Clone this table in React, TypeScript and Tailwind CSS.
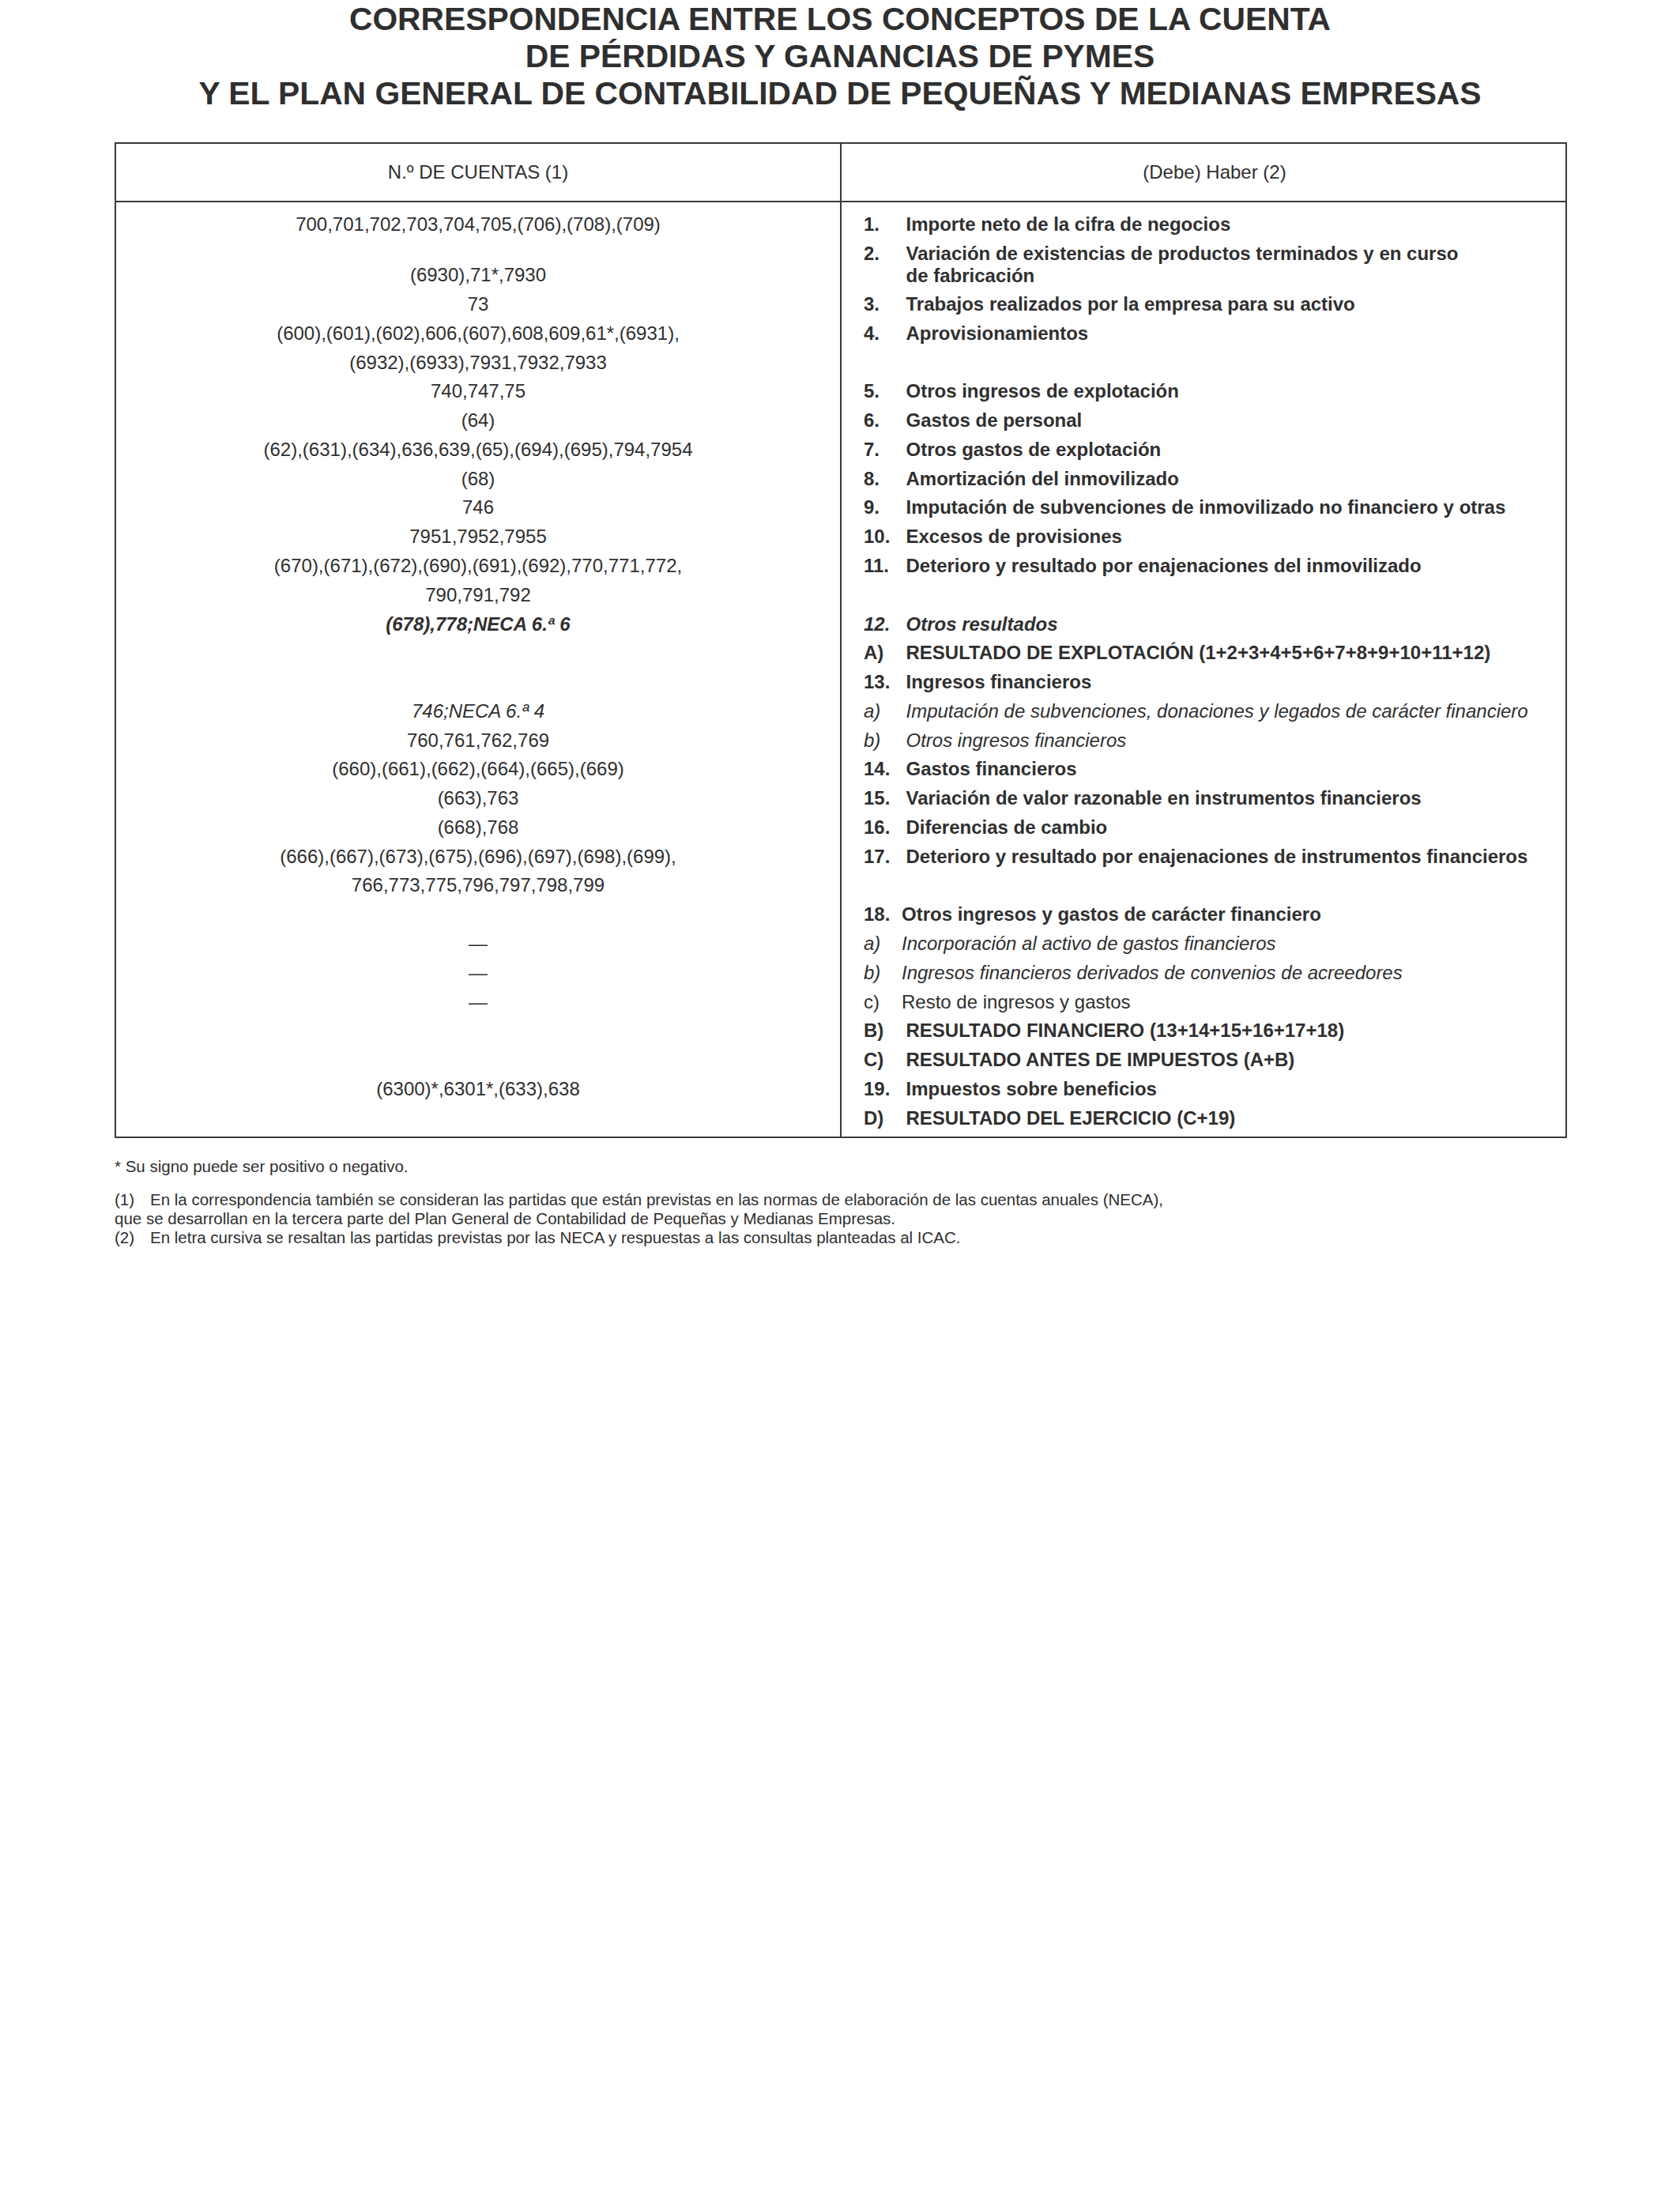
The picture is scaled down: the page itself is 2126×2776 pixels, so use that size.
type Row = {
  l?: string;
  ls?: "i" | "bi";
  n?: string;
  t?: string;
  t2?: string;
  r?: "b" | "i" | "bi" | "r";
  narrow?: boolean;
};

const rows: Row[] = [
  { l: "700,701,702,703,704,705,(706),(708),(709)", n: "1.", t: "Importe neto de la cifra de negocios" },
  {
    l: "(6930),71*,7930",
    n: "2.",
    t: "Variación de existencias de productos terminados y en curso",
    t2: "de fabricación"
  },
  { l: "73", n: "3.", t: "Trabajos realizados por la empresa para su activo" },
  { l: "(600),(601),(602),606,(607),608,609,61*,(6931),", n: "4.", t: "Aprovisionamientos" },
  { l: "(6932),(6933),7931,7932,7933" },
  { l: "740,747,75", n: "5.", t: "Otros ingresos de explotación" },
  { l: "(64)", n: "6.", t: "Gastos de personal" },
  { l: "(62),(631),(634),636,639,(65),(694),(695),794,7954", n: "7.", t: "Otros gastos de explotación" },
  { l: "(68)", n: "8.", t: "Amortización del inmovilizado" },
  { l: "746", n: "9.", t: "Imputación de subvenciones de inmovilizado no financiero y otras" },
  { l: "7951,7952,7955", n: "10.", t: "Excesos de provisiones" },
  {
    l: "(670),(671),(672),(690),(691),(692),770,771,772,",
    n: "11.",
    t: "Deterioro y resultado por enajenaciones del inmovilizado"
  },
  { l: "790,791,792" },
  { l: "(678),778;NECA 6.ª 6", ls: "bi", n: "12.", t: "Otros resultados", r: "bi" },
  { n: "A)", t: "RESULTADO DE EXPLOTACIÓN (1+2+3+4+5+6+7+8+9+10+11+12)" },
  { n: "13.", t: "Ingresos financieros" },
  {
    l: "746;NECA 6.ª 4",
    ls: "i",
    n: "a)",
    t: "Imputación de subvenciones, donaciones y legados de carácter financiero",
    r: "i"
  },
  { l: "760,761,762,769", n: "b)", t: "Otros ingresos financieros", r: "i" },
  { l: "(660),(661),(662),(664),(665),(669)", n: "14.", t: "Gastos financieros" },
  { l: "(663),763", n: "15.", t: "Variación de valor razonable en instrumentos financieros" },
  { l: "(668),768", n: "16.", t: "Diferencias de cambio" },
  {
    l: "(666),(667),(673),(675),(696),(697),(698),(699),",
    n: "17.",
    t: "Deterioro y resultado por enajenaciones de instrumentos financieros"
  },
  { l: "766,773,775,796,797,798,799" },
  { n: "18.", t: "Otros ingresos y gastos de carácter financiero", narrow: true },
  { l: "—", n: "a)", t: "Incorporación al activo de gastos financieros", r: "i", narrow: true },
  { l: "—", n: "b)", t: "Ingresos financieros derivados de convenios de acreedores", r: "i", narrow: true },
  { l: "—", n: "c)", t: "Resto de ingresos y gastos", r: "r", narrow: true },
  { n: "B)", t: "RESULTADO FINANCIERO (13+14+15+16+17+18)" },
  { n: "C)", t: "RESULTADO ANTES DE IMPUESTOS (A+B)" },
  { l: "(6300)*,6301*,(633),638", n: "19.", t: "Impuestos sobre beneficios" },
  { n: "D)", t: "RESULTADO DEL EJERCICIO (C+19)" }
];

const rightStyle = {
  b: "font-bold",
  i: "italic",
  bi: "font-bold italic",
  r: ""
};

const leftStyle = {
  i: "italic",
  bi: "font-bold italic"
};

function LeftCell({ row }: { row: Row }) {
  const style = row.ls ? leftStyle[row.ls] : "";
  if (row.t2) {
    return (
      <div className={`h-[64.37px] pt-[27.6px] text-center leading-[36.77px] ${style}`}>{row.l}</div>
    );
  }
  return <div className={`h-[36.77px] text-center leading-[36.77px] ${style}`}>{row.l ?? ""}</div>;
}

function RightCell({ row }: { row: Row }) {
  const style = rightStyle[row.r ?? "b"];
  const numW = row.narrow ? "w-[48px]" : "w-[53.5px]";
  if (row.t2) {
    return (
      <div className={`flex h-[64.37px] pt-[4.6px] leading-[27.6px] ${style}`}>
        <span className={`shrink-0 ${numW}`}>{row.n}</span>
        <span>
          {row.t}
          <br />
          {row.t2}
        </span>
      </div>
    );
  }
  return (
    <div className={`flex h-[36.77px] leading-[36.77px] ${style}`}>
      <span className={`shrink-0 ${numW}`}>{row.n ?? ""}</span>
      <span className="whitespace-nowrap">{row.t ?? ""}</span>
    </div>
  );
}

export default function App() {
  return (
    <div className="min-h-[2776px] w-[2126px] bg-white font-['Liberation_Sans',Arial,sans-serif] text-[#2f2f2f]">
      <h1 className="pt-[1px] text-center text-[40.8px] font-bold leading-[47px]">
        CORRESPONDENCIA ENTRE LOS CONCEPTOS DE LA CUENTA
        <br />
        DE PÉRDIDAS Y GANANCIAS DE PYMES
        <br />
        Y EL PLAN GENERAL DE CONTABILIDAD DE PEQUEÑAS Y MEDIANAS EMPRESAS
      </h1>

      <div className="ml-[145px] mt-[38px] w-[1838px] border-2 border-[#3a3a3a] text-[24px]">
        <div className="grid h-[74px] grid-cols-[918px_1fr] border-b-2 border-[#3a3a3a]">
          <div className="flex items-center justify-center border-r-2 border-[#3a3a3a]">N.º DE CUENTAS (1)</div>
          <div className="flex items-center justify-center pl-[28px]">(Debe) Haber (2)</div>
        </div>
        <div className="grid grid-cols-[918px_1fr]">
          <div className="border-r-2 border-[#3a3a3a] pt-[10px] pb-[5px]">
            {rows.map((row, i) => (
              <LeftCell key={i} row={row} />
            ))}
          </div>
          <div className="pl-[28px] pt-[10px] pb-[5px]">
            {rows.map((row, i) => (
              <RightCell key={i} row={row} />
            ))}
          </div>
        </div>
      </div>

      <div className="ml-[145px] mt-[24px] text-[20.5px] leading-[23.5px]">* Su signo puede ser positivo o negativo.</div>
      <div className="ml-[145px] mt-[18px] text-[20.5px] leading-[24px]">
        <span className="inline-block w-[45px]">(1)</span>
        En la correspondencia también se consideran las partidas que están previstas en las normas de elaboración de las
        cuentas anuales (NECA),
        <br />
        que se desarrollan en la tercera parte del Plan General de Contabilidad de Pequeñas y Medianas Empresas.
        <br />
        <span className="inline-block w-[45px]">(2)</span>
        En letra cursiva se resaltan las partidas previstas por las NECA y respuestas a las consultas planteadas al ICAC.
      </div>
    </div>
  );
}
